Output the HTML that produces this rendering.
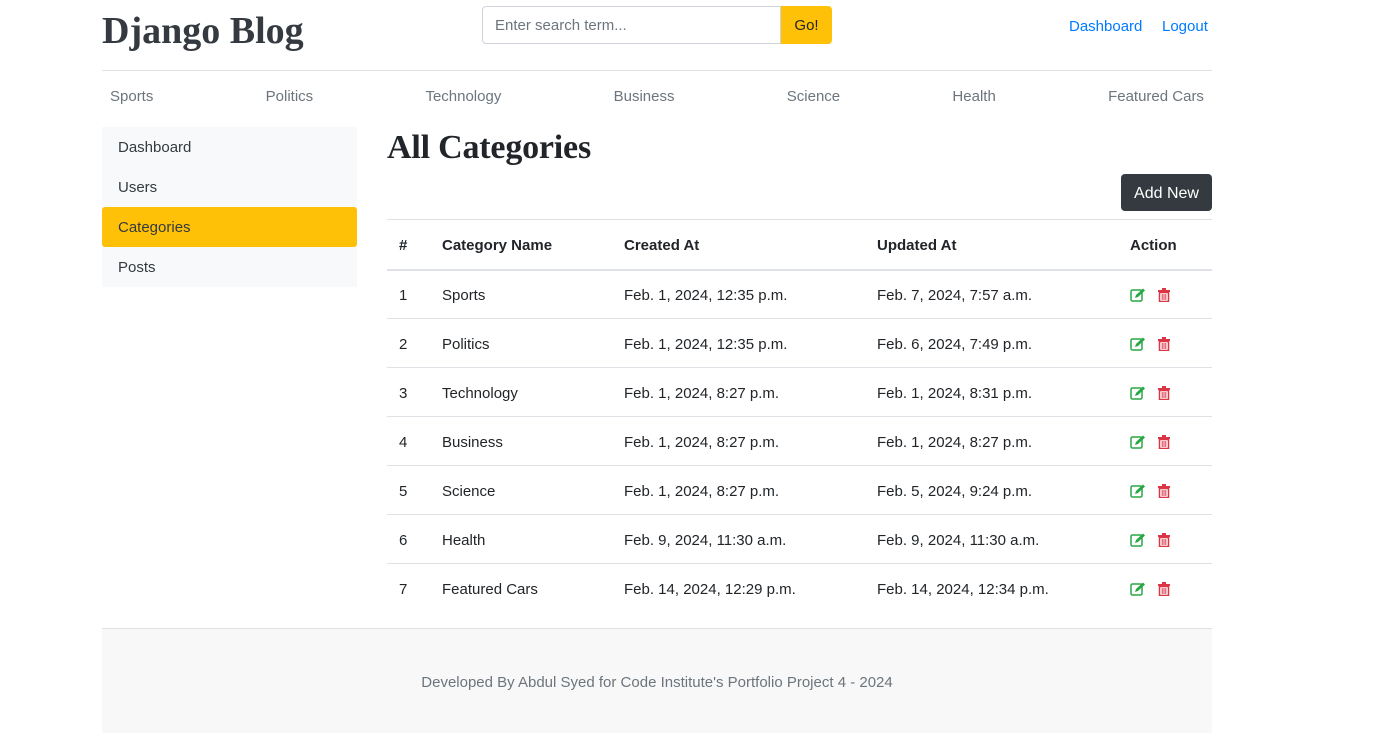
<!DOCTYPE html>
<html><head><meta charset="utf-8"><style>
*{box-sizing:border-box;margin:0;padding:0}
body{width:1378px;height:756px;background:#fff;font-family:"Liberation Sans",sans-serif;font-size:15px;color:#212529;position:relative;overflow:hidden}
.abs{position:absolute}
.title{left:102px;top:9px;font-family:"Liberation Serif",serif;font-weight:bold;font-size:38px;color:#343a40;letter-spacing:0px}
.search{left:482px;top:6px;width:299px;height:38px;border:1px solid #ced4da;border-radius:4px 0 0 4px;padding:0 12px;line-height:38px;color:#6c757d}
.go{left:781px;top:6px;width:51px;height:38px;background:#ffc107;border-radius:0 4px 4px 0;text-align:center;line-height:40px;color:#212529}
.tl{top:18px;color:#007bff;font-size:15px}
.hr{left:102px;width:1110px;height:1px;background:#dee2e6}
.nav{left:102px;top:88px;width:1110px;display:flex;justify-content:space-between;color:#6c757d;padding:0 8px}
.side{left:102px;top:127px;width:255px;background:#f8f9fa}
.side div{height:40px;line-height:42px;padding-left:16px;color:#343a40}
.side .act{background:#ffc107;border-radius:3px}
h1{position:absolute;left:387px;top:129px;font-family:"Liberation Serif",serif;font-size:34px;font-weight:bold;color:#212529;letter-spacing:-0.2px}
.add{left:1121px;top:174px;width:91px;height:37px;background:#343a40;color:#fff;border-radius:4px;text-align:center;line-height:39px;font-size:16px}
table{position:absolute;left:387px;top:219px;width:825px;border-collapse:collapse}
td,th{text-align:left;border-top:1px solid #dee2e6;height:49px;padding:3px 0 0 12px;vertical-align:middle;font-weight:normal}
th{font-weight:bold;border-bottom:2px solid #dee2e6;height:50px}
.foot{left:102px;top:628px;width:1110px;height:105px;background:#f8f8f8;border-top:1px solid #dee2e6;text-align:center;line-height:108px;color:#6c757d}
svg{display:block}
.ic{display:flex;align-items:center;gap:12px;margin-top:-2px}
</style></head><body>
<div class="abs title">Django Blog</div>
<div class="abs search">Enter search term...</div>
<div class="abs go">Go!</div>
<div class="abs tl" style="left:1069px">Dashboard</div>
<div class="abs tl" style="left:1162px">Logout</div>
<div class="abs hr" style="top:70px"></div>
<div class="abs nav"><span>Sports</span><span>Politics</span><span>Technology</span><span>Business</span><span>Science</span><span>Health</span><span>Featured Cars</span></div>
<div class="abs side"><div>Dashboard</div><div>Users</div><div class="act">Categories</div><div>Posts</div></div>
<h1>All Categories</h1>
<div class="abs add">Add New</div>
<table>
<colgroup><col style="width:43px"><col style="width:182px"><col style="width:253px"><col style="width:253px"><col></colgroup>
<tr><th>#</th><th>Category Name</th><th>Created At</th><th>Updated At</th><th>Action</th></tr>
<tbody id="tb"></tbody>
</table>
<div class="abs foot">Developed By Abdul Syed for Code Institute's Portfolio Project 4 - 2024</div>
<script>
var r=[["1","Sports","Feb. 1, 2024, 12:35 p.m.","Feb. 7, 2024, 7:57 a.m."],["2","Politics","Feb. 1, 2024, 12:35 p.m.","Feb. 6, 2024, 7:49 p.m."],["3","Technology","Feb. 1, 2024, 8:27 p.m.","Feb. 1, 2024, 8:31 p.m."],["4","Business","Feb. 1, 2024, 8:27 p.m.","Feb. 1, 2024, 8:27 p.m."],["5","Science","Feb. 1, 2024, 8:27 p.m.","Feb. 5, 2024, 9:24 p.m."],["6","Health","Feb. 9, 2024, 11:30 a.m.","Feb. 9, 2024, 11:30 a.m."],["7","Featured Cars","Feb. 14, 2024, 12:29 p.m.","Feb. 14, 2024, 12:34 p.m."]];
var ic='<span class="ic"><svg width="16" height="14" viewBox="0 0 16 14"><rect x="1" y="2" width="11" height="11" rx="1.5" fill="none" stroke="#28a745" stroke-width="1.5"/><path d="M5 10 L6 7 L13 0.5 L15 2.5 L8 9 Z" fill="#28a745"/></svg><svg width="12" height="14" viewBox="0 0 12 14"><rect x="0" y="2" width="12" height="2" fill="#dc3545"/><rect x="4" y="0" width="4" height="2" fill="#dc3545"/><path d="M1.5 4.5 H10.5 V13.5 H1.5 Z" fill="none" stroke="#dc3545" stroke-width="1.5"/><path d="M4.2 6v6M6 6v6M7.8 6v6" stroke="#dc3545" stroke-width="1"/></svg></span>';
var h='';r.forEach(function(x){h+='<tr><td>'+x[0]+'</td><td>'+x[1]+'</td><td>'+x[2]+'</td><td>'+x[3]+'</td><td>'+ic+'</td></tr>'});
document.getElementById('tb').innerHTML=h;
</script>
</body></html>
